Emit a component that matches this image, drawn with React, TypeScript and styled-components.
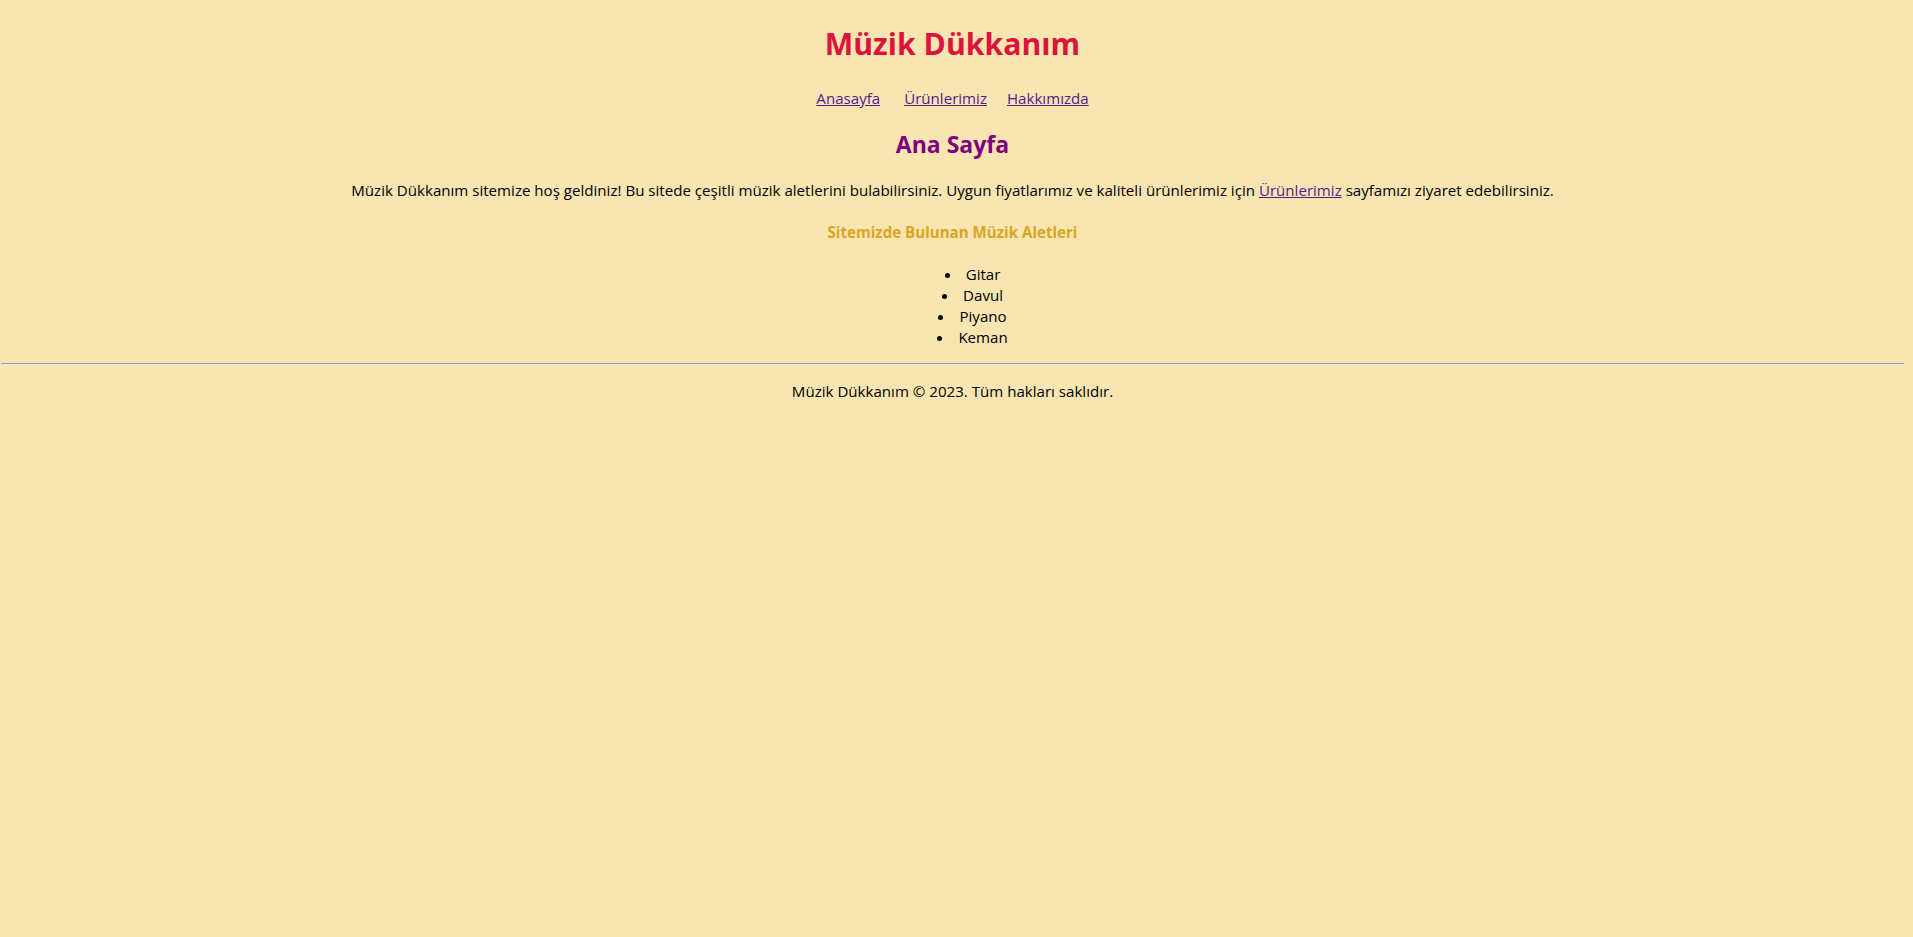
import React from "react";
import styled, { createGlobalStyle } from "styled-components";

const Global = createGlobalStyle`
  html, body { margin: 0; padding: 0; }
  body {
    background: #f9e5b1;
    font-family: "Open Sans", "Noto Sans", sans-serif;
    color: #000;
  }
`;

const Page = styled.div`
  padding: 1px 9px 0 1px;
  text-align: center;
`;

const Title = styled.h1`
  font-size: 30.2px;
  line-height: 42px;
  font-weight: 700;
  color: #dc143c;
  margin: 22px 0 23px;
`;

const Nav = styled.nav`
  display: flex;
  justify-content: center;
  gap: 20px;
  font-size: 15.1px;
  line-height: 21px;
  margin: 0 0 19px;
`;

const Link = styled.a<{ $extra?: number }>`
  color: #551a8b;
  text-decoration: underline;
  margin-right: ${(p) => p.$extra ?? 0}px;
`;

const Heading = styled.h2`
  font-size: 23px;
  line-height: 32px;
  font-weight: 700;
  color: #800080;
  margin: 0 0 20px;
`;

const Text = styled.p`
  font-size: 15.1px;
  line-height: 21px;
  margin: 0 0 19px;
`;

const SubHeading = styled.h3`
  font-size: 15.1px;
  line-height: 25px;
  font-weight: 700;
  color: #daa520;
  margin: 0 0 19px;
`;

const List = styled.ul`
  margin: 0 0 15px;
  padding-left: 40px;
  list-style-position: inside;
  font-size: 15.1px;
  line-height: 21px;
`;

const Rule = styled.hr`
  margin: 0;
  border: none;
  border-top: 1px solid #9a9a9a;
  border-bottom: 1px solid #eeeeee;
  height: 0;
`;

const Footer = styled.footer`
  font-size: 15.1px;
  line-height: 21px;
  padding-top: 16px;
`;

export default function App() {
  return (
    <>
      <Global />
      <Page>
        <Title>Müzik Dükkanım</Title>
        <Nav>
          <Link href="#" $extra={4}>Anasayfa</Link>
          <Link href="#">Ürünlerimiz</Link>
          <Link href="#">Hakkımızda</Link>
        </Nav>
        <Heading>Ana Sayfa</Heading>
        <Text>
          Müzik Dükkanım sitemize hoş geldiniz! Bu sitede çeşitli müzik aletlerini bulabilirsiniz. Uygun fiyatlarımız ve kaliteli ürünlerimiz için <Link href="#">Ürünlerimiz</Link> sayfamızı ziyaret edebilirsiniz.
        </Text>
        <SubHeading>Sitemizde Bulunan Müzik Aletleri</SubHeading>
        <List>
          <li>Gitar</li>
          <li>Davul</li>
          <li>Piyano</li>
          <li>Keman</li>
        </List>
        <Rule />
        <Footer>Müzik Dükkanım © 2023. Tüm hakları saklıdır.</Footer>
      </Page>
    </>
  );
}
